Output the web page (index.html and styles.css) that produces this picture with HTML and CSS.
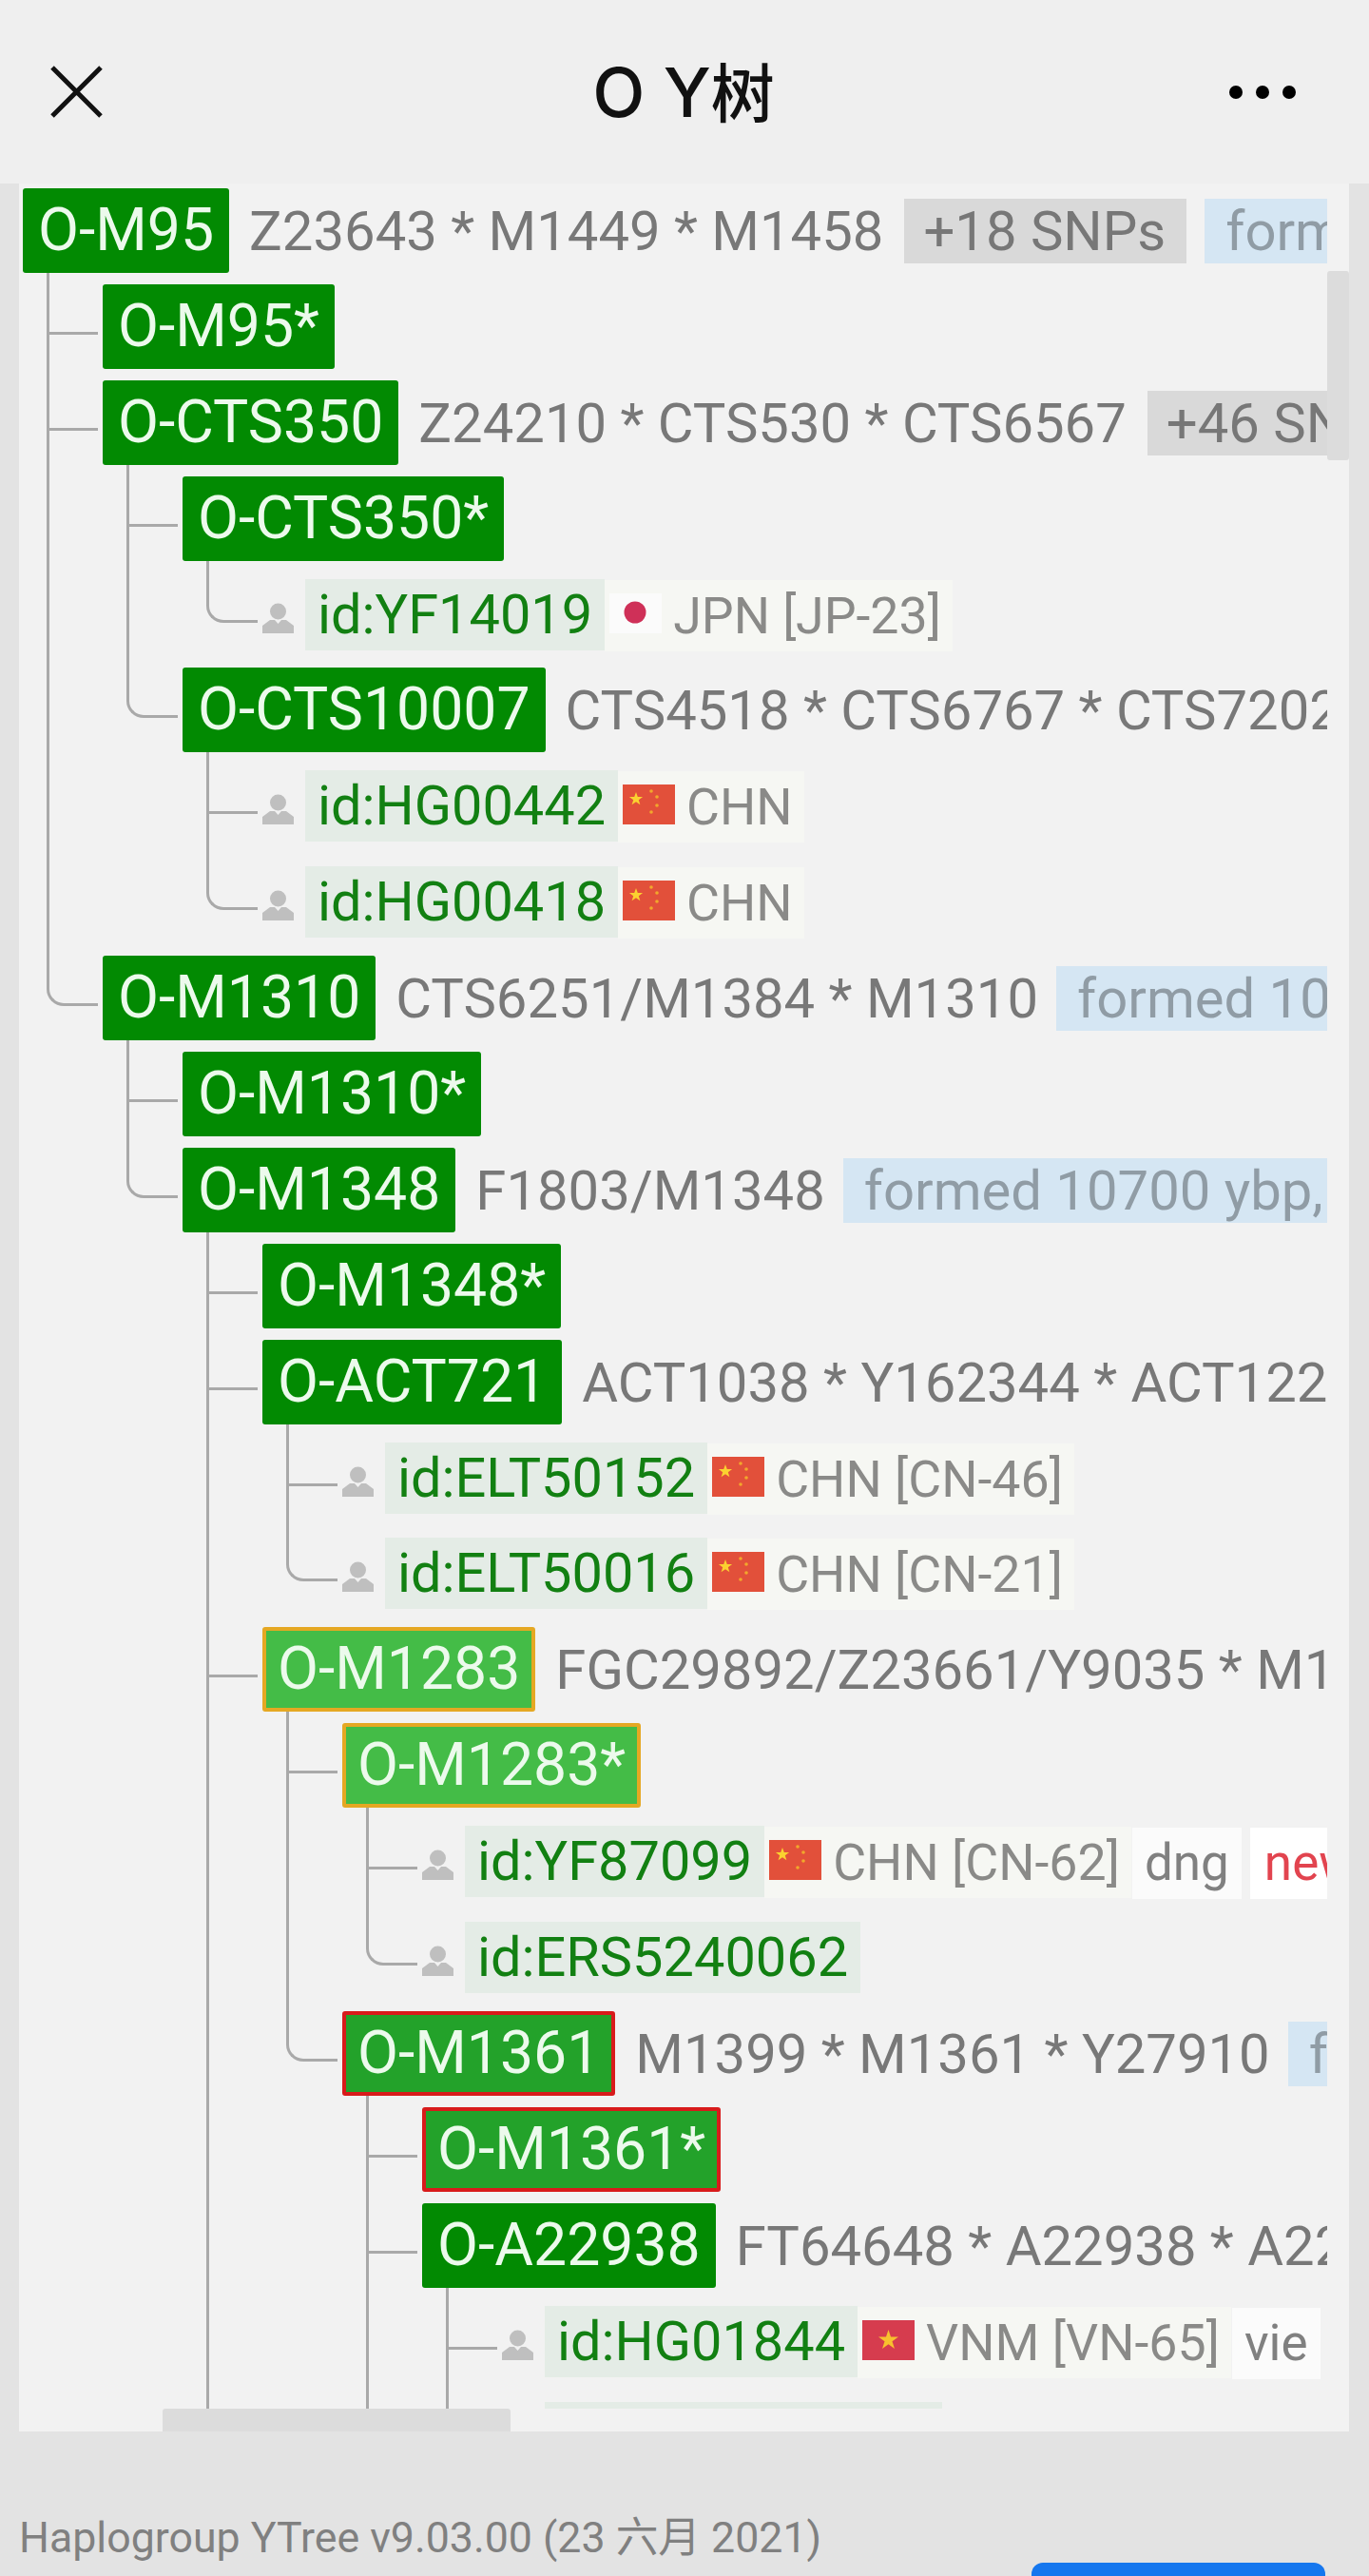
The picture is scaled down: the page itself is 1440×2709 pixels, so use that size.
FILE: index.html
```html
<!DOCTYPE html>
<html lang="zh">
<head>
  <meta charset="UTF-8" />
  <meta name="viewport" content="width=device-width, initial-scale=1.0"/>
  <title>O Y树</title>
  <link rel="stylesheet" href="styles.css">
</head>
<body>
  <svg class="defs" width="0" height="0">
    <symbol id="person" viewBox="0 0 33 32">
      <circle cx="16.500" cy="9" r="8.500"/>
      <path d="M0 32V24l8-6h5l3.500 4 3.500-4h5l8 6v8z"/>
    </symbol>
    <symbol id="flag-cn" viewBox="0 0 55 42">
      <rect width="55" height="42" fill="#e2503a"/>
      <polygon fill="#fbd230" points="14,8 15.800,13 21.100,13 16.800,16.200 18.400,21.300 14,18.200 9.600,21.300 11.200,16.200 6.900,13 12.200,13"/>
      <circle cx="30" cy="7" r="1.800" fill="#f2a72c"/>
      <circle cx="36" cy="13" r="1.800" fill="#f2a72c"/>
      <circle cx="36" cy="22" r="1.800" fill="#f2a72c"/>
      <circle cx="30" cy="29" r="1.800" fill="#f2a72c"/>
    </symbol>
    <symbol id="flag-jp" viewBox="0 0 55 42">
      <rect width="55" height="42" fill="#fbfbfb"/>
      <circle cx="27" cy="20" r="11.500" fill="#cf3058"/>
    </symbol>
    <symbol id="flag-vn" viewBox="0 0 55 42">
      <rect width="55" height="42" fill="#d63c4e"/>
      <polygon fill="#f8c02e" points="27.500,10 30,17.600 38,17.600 31.500,22.300 34,30 27.500,25.200 21,30 23.500,22.300 17,17.600 25,17.600"/>
    </symbol>
  </svg>

  <header class="topbar">
    <svg class="close" viewBox="0 0 55 55" width="55" height="55"><path d="M2 2l51 51M53 2L2 53"/></svg>
    <div class="title">O Y<span class="title-cjk">树</span></div>
    <div class="dots"><span></span><span></span><span></span></div>
  </header>

  <main class="page">
    <div class="panel">
      <div class="scroller">
        <ul class="tree root">
          <li class="last">
            <div class="row"><a class="node">O-M95</a><span class="snps">Z23643 * M1449 * M1458</span><span class="more">+18 SNPs</span><span class="formed">formed</span></div>
            <ul class="tree">
              <li><div class="row"><a class="node">O-M95*</a></div></li>
              <li>
                <div class="row"><a class="node">O-CTS350</a><span class="snps">Z24210 * CTS530 * CTS6567</span><span class="more">+46 SNPs</span></div>
                <ul class="tree">
                  <li>
                    <div class="row"><a class="node">O-CTS350*</a></div>
                    <ul class="tree">
                      <li class="last"><div class="row"><svg class="person"><use href="#person"/></svg><span class="sample">id:YF14019</span><span class="country"><svg class="flag"><use href="#flag-jp"/></svg>JPN [JP-23]</span></div></li>
                    </ul>
                  </li>
                  <li class="last">
                    <div class="row"><a class="node">O-CTS10007</a><span class="snps">CTS4518 * CTS6767 * CTS7202</span></div>
                    <ul class="tree">
                      <li><div class="row"><svg class="person"><use href="#person"/></svg><span class="sample">id:HG00442</span><span class="country"><svg class="flag"><use href="#flag-cn"/></svg>CHN</span></div></li>
                      <li class="last"><div class="row"><svg class="person"><use href="#person"/></svg><span class="sample">id:HG00418</span><span class="country"><svg class="flag"><use href="#flag-cn"/></svg>CHN</span></div></li>
                    </ul>
                  </li>
                </ul>
              </li>
              <li class="last">
                <div class="row"><a class="node">O-M1310</a><span class="snps">CTS6251/M1384 * M1310</span><span class="formed">formed 10</span></div>
                <ul class="tree">
                  <li><div class="row"><a class="node">O-M1310*</a></div></li>
                  <li class="last">
                    <div class="row"><a class="node">O-M1348</a><span class="snps">F1803/M1348</span><span class="formed">formed 10700 ybp,</span></div>
                    <ul class="tree">
                      <li><div class="row"><a class="node">O-M1348*</a></div></li>
                      <li>
                        <div class="row"><a class="node">O-ACT721</a><span class="snps">ACT1038 * Y162344 * ACT122</span></div>
                        <ul class="tree">
                          <li><div class="row"><svg class="person"><use href="#person"/></svg><span class="sample">id:ELT50152</span><span class="country"><svg class="flag"><use href="#flag-cn"/></svg>CHN [CN-46]</span></div></li>
                          <li class="last"><div class="row"><svg class="person"><use href="#person"/></svg><span class="sample">id:ELT50016</span><span class="country"><svg class="flag"><use href="#flag-cn"/></svg>CHN [CN-21]</span></div></li>
                        </ul>
                      </li>
                      <li>
                        <div class="row"><a class="node node-gold">O-M1283</a><span class="snps">FGC29892/Z23661/Y9035 * M1283</span></div>
                        <ul class="tree">
                          <li>
                            <div class="row"><a class="node node-gold">O-M1283*</a></div>
                            <ul class="tree">
                              <li><div class="row"><svg class="person"><use href="#person"/></svg><span class="sample">id:YF87099</span><span class="country"><svg class="flag"><use href="#flag-cn"/></svg>CHN [CN-62]</span><span class="lang">dng</span><span class="new">new</span></div></li>
                              <li class="last"><div class="row"><svg class="person"><use href="#person"/></svg><span class="sample">id:ERS5240062</span></div></li>
                            </ul>
                          </li>
                          <li class="last">
                            <div class="row"><a class="node node-red">O-M1361</a><span class="snps">M1399 * M1361 * Y27910</span><span class="formed">f</span></div>
                            <ul class="tree">
                              <li><div class="row"><a class="node node-red">O-M1361*</a></div></li>
                              <li>
                                <div class="row"><a class="node">O-A22938</a><span class="snps">FT64648 * A22938 * A22</span></div>
                                <ul class="tree">
                                  <li><div class="row"><svg class="person"><use href="#person"/></svg><span class="sample">id:HG01844</span><span class="country"><svg class="flag"><use href="#flag-vn"/></svg>VNM [VN-65]</span><span class="lang">vie</span></div></li>
                                  <li><div class="row"><svg class="person"><use href="#person"/></svg><span class="sample sample-cut"></span></div></li>
                                </ul>
                              </li>
                            </ul>
                          </li>
                        </ul>
                      </li>
                    </ul>
                  </li>
                </ul>
              </li>
            </ul>
          </li>
        </ul>
      </div>
      <div class="thumb-v"></div>
      <div class="thumb-h"></div>
    </div>
  </main>

  <footer class="foot">
    <div class="version">Haplogroup YTree v9.03.00 (23 六月 2021)</div>
    <button class="action"></button>
  </footer>
</body>
</html>
```

FILE: styles.css
```css
* {
  box-sizing: border-box;
}
html, body {
  height: 2709px;
  overflow: hidden;
}
body {
  margin: 0;
  background: #e3e3e3;
  font-family: Roboto, "Noto Sans CJK SC", sans-serif;
}
.defs {
  position: absolute;
}

/* top bar */
.topbar {
  height: 193px;
  background: #efefef;
  display: grid;
  grid-template-columns: 1fr auto 1fr;
  align-items: center;
  padding: 0 77px 0 53px;
}
.close {
  fill: none;
  stroke: #111;
  stroke-width: 5;
}
.title {
  font-family: Inter, "Noto Sans CJK SC", sans-serif;
  font-size: 72px;
  line-height: 80px;
  font-weight: 500;
  color: #111;
  margin: -2px 0 0 22px;
}
.title-cjk {
  font-family: "Noto Sans CJK SC", sans-serif;
  font-size: 67px;
}
.dots {
  justify-self: end;
  display: flex;
  gap: 14px;
}
.dots span {
  width: 14px;
  height: 14px;
  border-radius: 50%;
  background: #000;
}

/* tree panel */
.page {
  padding: 0 21px 0 20px;
}
.panel {
  position: relative;
  height: 2364px;
  background: #f2f2f2;
}
.scroller {
  height: 2340px;
  margin-right: 23px;
  padding: 5px 0 0 4px;
  overflow: hidden;
}
.thumb-v {
  position: absolute;
  top: 92px;
  right: 0;
  width: 23px;
  height: 199px;
  border-radius: 3px;
  background: #dcdcdc;
}
.thumb-h {
  position: absolute;
  left: 151px;
  bottom: 0;
  width: 366px;
  height: 24px;
  border-radius: 3px 3px 0 0;
  background: #dcdcdc;
}

.tree {
  list-style: none;
  margin: 0;
  padding: 0 0 0 84px;
}
.tree.root {
  padding: 0;
  width: 3000px;
}
.tree li {
  position: relative;
}
.tree li::before {
  content: "";
  position: absolute;
  left: -59px;
  top: -12px;
  width: 51px;
  height: 62px;
  border-left: 3px solid #a9a9a9;
  border-bottom: 3px solid #a9a9a9;
}
.tree li.last::before {
  border-bottom-left-radius: 18px;
}
.tree li:not(.last)::after {
  content: "";
  position: absolute;
  left: -59px;
  top: -12px;
  bottom: 0;
  border-left: 3px solid #a9a9a9;
}
.root > li::before {
  display: none;
}

.row {
  display: flex;
  align-items: baseline;
  height: 89px;
  margin-bottom: 11.9px;
  white-space: nowrap;
  font-size: 58px;
}
/* keeps the baseline of rows without a node level with the others */
.row::before {
  content: "";
  width: 0;
  height: 64px;
}
.node {
  height: 89px;
  line-height: 87px;
  padding: 0 16px;
  border-radius: 3px;
  background: #028a02;
  color: #ecfaec;
  font-size: 62.5px;
}
.node-gold {
  line-height: 79px;
  padding: 0 12px;
  border: 4px solid #e5a823;
  background: #44bc47;
}
.node-red {
  line-height: 79px;
  padding: 0 12px;
  border: 4px solid #d81b1b;
  background: #23a22a;
}
.snps {
  margin-left: 21px;
  color: #787878;
}
.more {
  margin-left: 22px;
  padding: 0 22px 0 20px;
  line-height: 68px;
  background: #d9d9d9;
  color: #777;
}
.formed {
  margin-left: 19px;
  padding: 0 22px;
  line-height: 68px;
  background: #d5e6f3;
  color: #909ca5;
}
.person {
  width: 33px;
  height: 32px;
  margin-right: 12px;
  fill: #bfbfbf;
}
.sample {
  padding: 0 13px;
  line-height: 75px;
  background: #e4ece6;
  color: #128012;
  font-size: 57.7px;
}
.sample-cut {
  align-self: flex-start;
  width: 418px;
  height: 75px;
  margin-top: 8px;
}
.country {
  padding: 0 12px 0 5px;
  line-height: 75px;
  background: #f6f7f3;
  color: #8a8a88;
  font-size: 53.7px;
}
.flag {
  width: 55px;
  height: 42px;
  margin-right: 12px;
}
.lang {
  margin-left: 1px;
  padding: 0 13px;
  line-height: 75px;
  background: #fbfbfb;
  color: #808080;
  font-size: 53px;
}
.new {
  margin-left: 9px;
  padding: 0 15px;
  line-height: 75px;
  background: #fff;
  color: #e2444f;
  font-size: 53px;
}

/* footer */
.foot {
  display: flex;
  flex-direction: column;
  padding: 86px 46px 0 20px;
}
.version {
  font-size: 44.7px;
  line-height: 52px;
  color: #808080;
}
.action {
  align-self: flex-end;
  width: 309px;
  height: 70px;
  border: none;
  border-radius: 12px;
  background: #1677ee;
}
```
